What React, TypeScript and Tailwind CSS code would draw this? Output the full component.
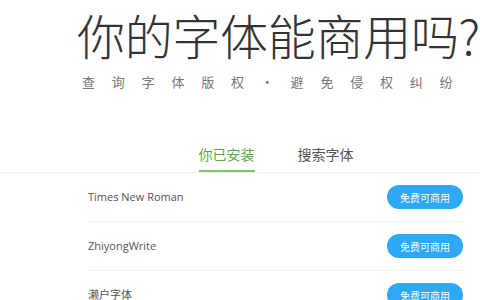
const fonts = [
  { name: 'Times New Roman' },
  { name: 'ZhiyongWrite' },
  { name: '濑户字体' },
];

const cjk = "font-['Noto_Sans_CJK_SC',sans-serif]";

export default function App() {
  return (
    <div className="w-[480px] h-[300px] overflow-hidden bg-white font-['Open_Sans','Noto_Sans_CJK_SC',sans-serif]">
      <div className="pt-[5px] pl-[77px]">
        <h1 className={`${cjk} text-[48px] leading-[58px] font-light text-[#333] tracking-[-0.3px] whitespace-nowrap`}>
          你的字体能商用吗?
        </h1>
        <p className={`${cjk} mt-[10px] pl-[5px] text-[13px] leading-[18px] text-[#777] tracking-[16.8px] whitespace-nowrap`}>
          查询字体版权·避免侵权纠纷
        </p>
      </div>

      <div className="mt-[53px] border-b border-[#f0f0f0] flex justify-center gap-[43px] pl-[72px]">
        <div className={`${cjk} text-[14px] leading-[20px] text-[#5aa845] border-b-2 border-[#7fc36a] pb-[6px]`}>
          你已安装
        </div>
        <div className={`${cjk} text-[14px] leading-[20px] text-[#555] pb-[6px]`}>
          搜索字体
        </div>
      </div>

      <div className="ml-[88px] mr-[17px]">
        {fonts.map((f) => (
          <div key={f.name} className="h-[49px] flex items-center justify-between border-b border-[#f3f3f3]">
            <span className="text-[11px] text-[#555]">{f.name}</span>
            <span className={`${cjk} w-[76px] h-[24px] rounded-full bg-[#2ea9f5] text-white text-[10px] flex items-center justify-center`}>
              免费可商用
            </span>
          </div>
        ))}
      </div>
    </div>
  );
}
